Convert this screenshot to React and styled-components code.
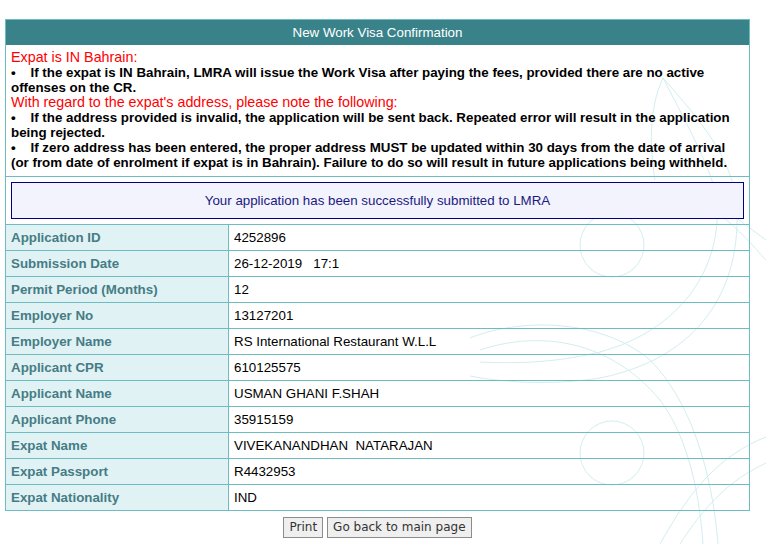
import React from "react";
import styled, { createGlobalStyle } from "styled-components";

const GlobalStyle = createGlobalStyle`
  html, body {
    margin: 0;
    padding: 0;
    background: #ffffff;
  }
  body {
    font-family: "Liberation Sans", Arial, sans-serif;
    font-size: 13.33px;
  }
`;

const bullet = "\u2022\u00a0\u00a0\u00a0\u00a0";

const rows = [
  ["Application ID", "4252896"],
  ["Submission Date", "26-12-2019   17:1"],
  ["Permit Period (Months)", "12"],
  ["Employer No", "13127201"],
  ["Employer Name", "RS International Restaurant W.L.L"],
  ["Applicant CPR", "610125575"],
  ["Applicant Name", "USMAN GHANI F.SHAH"],
  ["Applicant Phone", "35915159"],
  ["Expat Name", "VIVEKANANDHAN  NATARAJAN"],
  ["Expat Passport", "R4432953"],
  ["Expat Nationality", "IND"],
];

const Watermark = () => (
  <Deco width="766" height="544" viewBox="0 0 766 544">
    <g fill="none" stroke="#d3eeef" strokeWidth="1">
      <circle cx="612" cy="245" r="32" />
      <circle cx="612" cy="453" r="32" />
      <path d="M663 78 C 690 130, 712 170, 717 200 C 722 270, 680 330, 600 352 C 560 362, 520 364, 480 362" />
      <path d="M663 78 C 648 110, 650 150, 655 180" />
      <path d="M663 78 C 700 120, 735 160, 737 210 C 740 300, 690 360, 600 378 C 550 386, 500 382, 470 376" />
      <path d="M470 338 C 520 318, 600 318, 650 360 C 690 400, 712 470, 718 544" />
      <path d="M480 350 C 540 330, 610 340, 660 400 C 690 440, 700 500, 703 544" />
      <path d="M660 544 C 690 490, 720 455, 766 437" />
      <path d="M680 544 C 705 505, 730 480, 766 463" />
      <path d="M700 190 C 720 205, 745 225, 766 240" />
      <path d="M720 215 C 740 230, 752 245, 766 260" />
    </g>
  </Deco>
);

export default function App() {
  return (
    <Page>
      <GlobalStyle />
      <Watermark />
      <Panel>
        <Header>New Work Visa Confirmation</Header>
        <Notice>
          <Heading>Expat is IN Bahrain:</Heading>
          <Point>
            {bullet +
              "If the expat is IN Bahrain, LMRA will issue the Work Visa after paying the fees, provided there are no active offenses on the CR."}
          </Point>
          <Heading>With regard to the expat's address, please note the following:</Heading>
          <Point>
            {bullet +
              "If the address provided is invalid, the application will be sent back. Repeated error will result in the application being rejected."}
          </Point>
          <Point>
            {bullet +
              "If zero address has been entered, the proper address MUST be updated within 30 days from the date of arrival (or from date of enrolment if expat is in Bahrain). Failure to do so will result in future applications being withheld."}
          </Point>
        </Notice>
        <MessageRow>
          <Message>Your application has been successfully submitted to LMRA</Message>
        </MessageRow>
        <Details>
          {rows.map(([label, value]) => (
            <React.Fragment key={label}>
              <Label>{label}</Label>
              <Value>{value}</Value>
            </React.Fragment>
          ))}
        </Details>
      </Panel>
      <Actions>
        <Button>Print</Button>
        <Button>Go back to main page</Button>
      </Actions>
    </Page>
  );
}

const Page = styled.div`
  position: relative;
  width: 766px;
  min-height: 544px;
  padding: 19px 0 0 5px;
  box-sizing: border-box;
`;

const Deco = styled.svg`
  position: absolute;
  left: 0;
  top: 0;
  z-index: 0;
  pointer-events: none;
`;

const Panel = styled.div`
  position: relative;
  z-index: 1;
  width: 745px;
  border: 1px solid #6cbcc2;
  border-bottom: none;
  box-sizing: border-box;
`;

const Header = styled.div`
  height: 25px;
  line-height: 25px;
  background: #3a8289;
  color: #ffffff;
  font-size: 13.33px;
  text-align: center;
`;

const Notice = styled.div`
  padding: 5px 6px 6px 5px;
  border-bottom: 1px solid #6cbcc2;
  font-size: 13.33px;
  line-height: 15px;
`;

const Heading = styled.div`
  color: #ff0000;
  font-size: 14.3px;
`;

const Point = styled.div`
  color: #000000;
  font-weight: bold;
`;

const MessageRow = styled.div`
  padding: 5px;
  border-bottom: 1px solid #6cbcc2;
`;

const Message = styled.div`
  height: 35px;
  line-height: 35px;
  border: 1px solid #000080;
  background: #f3f3fd;
  color: #1a1a80;
  font-size: 13.33px;
  text-align: center;
`;

const Details = styled.div`
  display: grid;
  grid-template-columns: 223px 1fr;
  grid-auto-rows: 26px;
`;

const Label = styled.div`
  display: flex;
  align-items: center;
  padding: 0 5px;
  background: #e1f2f4;
  border-right: 1px solid #6cbcc2;
  border-bottom: 1px solid #6cbcc2;
  color: #467c85;
  font-size: 13.33px;
  font-weight: bold;
`;

const Value = styled.div`
  display: flex;
  align-items: center;
  padding: 0 5px;
  border-bottom: 1px solid #6cbcc2;
  color: #000000;
  font-size: 13.33px;
  white-space: pre;
`;

const Actions = styled.div`
  position: relative;
  z-index: 1;
  width: 745px;
  display: flex;
  justify-content: center;
  gap: 4px;
  margin-top: 6px;
`;

const Button = styled.button`
  height: 21px;
  padding: 0 5px;
  background: #efefef;
  border: 1px solid #8c8c8c;
  border-radius: 0;
  color: #333333;
  font-family: "DejaVu Sans", Tahoma, sans-serif;
  font-size: 12px;
  line-height: 19px;
`;
